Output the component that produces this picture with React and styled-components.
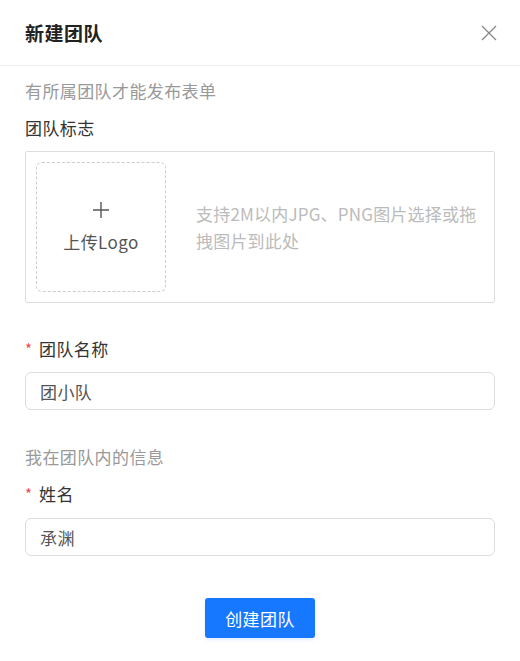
import React from 'react'
import styled, { createGlobalStyle } from 'styled-components'

const GlobalStyle = createGlobalStyle`
  body {
    margin: 0;
    background: #fff;
    font-family: "Noto Sans CJK SC", "Noto Sans", sans-serif;
    color: #333;
  }
`

const Dialog = styled.div`
  width: 520px;
  height: 661px;
  background: #fff;
`

const Header = styled.div`
  height: 65px;
  display: flex;
  align-items: center;
  justify-content: space-between;
  padding: 0 22px 0 25px;
  border-bottom: 1px solid #eeeeee;
`

const Title = styled.h2`
  margin: 0;
  font-size: 19px;
  letter-spacing: 0.5px;
  font-weight: 700;
  color: #222;
`

const CloseButton = styled.button`
  width: 18px;
  height: 18px;
  padding: 0;
  border: none;
  background: none;
  cursor: pointer;
  display: flex;
  align-items: center;
  justify-content: center;
`

const Body = styled.div`
  padding: 0 25px;
  display: flex;
  flex-direction: column;
  font-size: 17px;
  letter-spacing: 0.4px;
`

const Note = styled.div`
  margin-top: ${p => p.$top}px;
  line-height: 24px;
  color: #999;
`

const Label = styled.div`
  margin-top: ${p => p.$top}px;
  line-height: 24px;
  color: #333;
  display: flex;
  align-items: center;
`

const Required = styled.span`
  color: #f04b4b;
  width: 14px;
  font-size: 15px;
`

const UploadArea = styled.div`
  margin-top: 11px;
  height: 152px;
  box-sizing: border-box;
  border: 1px solid #dddddd;
  border-radius: 2px;
  padding: 10px 6px 10px 10px;
  display: flex;
  align-items: center;
  gap: 30px;
`

const DropBox = styled.div`
  width: 130px;
  height: 130px;
  flex-shrink: 0;
  box-sizing: border-box;
  border: 1px dashed #cccccc;
  border-radius: 6px;
  display: flex;
  flex-direction: column;
  align-items: center;
  justify-content: center;
  gap: 10px;
  color: #555;
  cursor: pointer;
`

const Hint = styled.div`
  flex: 1;
  line-height: 27px;
  letter-spacing: 0.2px;
  color: #bbbbbb;
`

const Input = styled.input`
  margin-top: ${p => p.$top}px;
  height: 38px;
  box-sizing: border-box;
  border: 1px solid #dddddd;
  border-radius: 6px;
  padding: 0 14px;
  font-family: inherit;
  font-size: 17px;
  letter-spacing: 0.4px;
  color: #555;
  outline: none;
`

const Footer = styled.div`
  margin-top: 42px;
  display: flex;
  justify-content: center;
`

const PrimaryButton = styled.button`
  width: 110px;
  height: 40px;
  border: none;
  border-radius: 3px;
  background: #1677ff;
  color: #fff;
  font-family: inherit;
  font-size: 17px;
  letter-spacing: 0.4px;
  box-shadow: 0 2px 3px rgba(22, 119, 255, 0.12);
  cursor: pointer;
`

function App() {
  return (
    <Dialog>
      <GlobalStyle />
      <Header>
        <Title>新建团队</Title>
        <CloseButton aria-label="关闭">
          <svg width="16" height="16" viewBox="0 0 16 16" stroke="#888" strokeWidth="1.3">
            <path d="M1 1L15 15M15 1L1 15" />
          </svg>
        </CloseButton>
      </Header>
      <Body>
        <Note $top={13}>有所属团队才能发布表单</Note>
        <Label $top={13}>团队标志</Label>
        <UploadArea>
          <DropBox>
            <svg width="18" height="18" viewBox="0 0 18 18" stroke="#555" strokeWidth="1.4">
              <path d="M9 1V17M1 9H17" />
            </svg>
            <span>上传Logo</span>
          </DropBox>
          <Hint>支持2M以内JPG、PNG图片选择或拖拽图片到此处</Hint>
        </UploadArea>
        <Label $top={34}><Required>*</Required>团队名称</Label>
        <Input $top={11} defaultValue="团小队" />
        <Note $top={35}>我在团队内的信息</Note>
        <Label $top={13}><Required>*</Required>姓名</Label>
        <Input $top={12} defaultValue="承渊" />
        <Footer>
          <PrimaryButton>创建团队</PrimaryButton>
        </Footer>
      </Body>
    </Dialog>
  )
}

export default App
